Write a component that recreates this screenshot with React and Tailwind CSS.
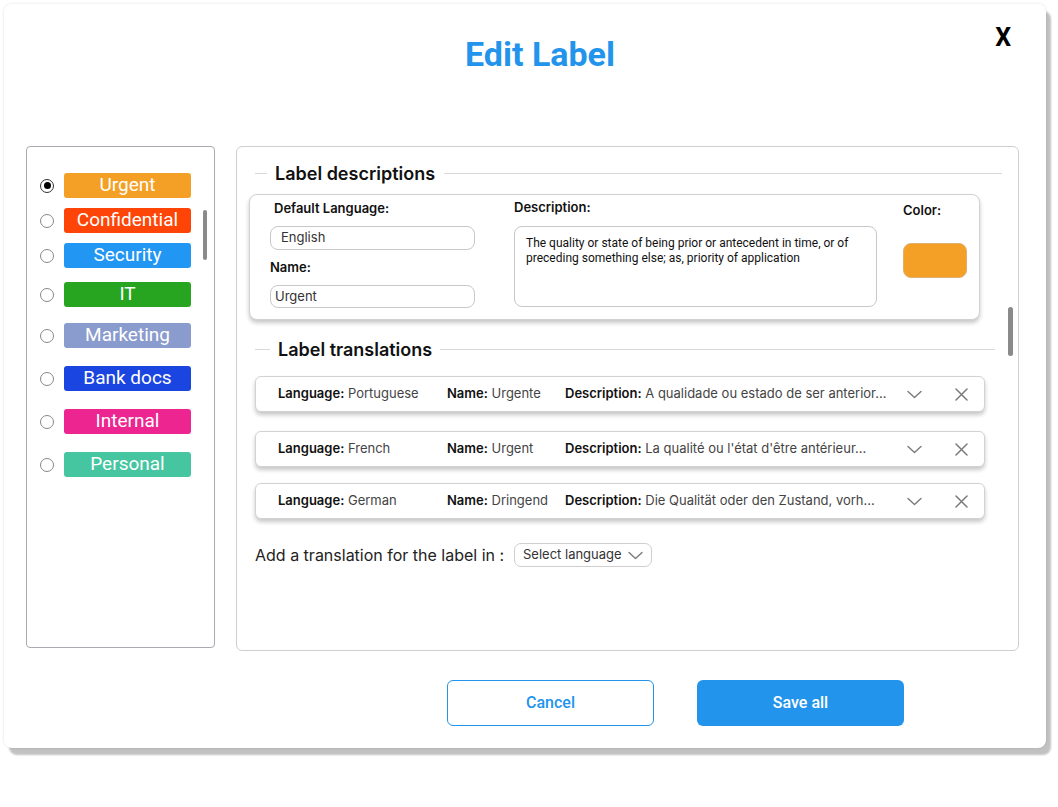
import React from "react";

const labels = [
  { name: "Urgent", bg: "bg-[#f4a026]", mt: "mt-0", checked: true },
  { name: "Confidential", bg: "bg-[#fe4406]", mt: "mt-[10px]" },
  { name: "Security", bg: "bg-[#2196f3]", mt: "mt-[10px]" },
  { name: "IT", bg: "bg-[#27a521]", mt: "mt-[14px]" },
  { name: "Marketing", bg: "bg-[#8a9bcd]", mt: "mt-[16px]" },
  { name: "Bank docs", bg: "bg-[#1a45e0]", mt: "mt-[18px]" },
  { name: "Internal", bg: "bg-[#ec2590]", mt: "mt-[18px]" },
  { name: "Personal", bg: "bg-[#45c6a0]", mt: "mt-[18px]" },
];

const translations = [
  { lang: "Portuguese", name: "Urgente", desc: "A qualidade ou estado de ser anterior...", mt: "mt-[15px]" },
  { lang: "French", name: "Urgent", desc: "La qualité ou l'état d'être antérieur...", mt: "mt-[19px]" },
  { lang: "German", name: "Dringend", desc: "Die Qualität oder den Zustand, vorh...", mt: "mt-[16px]" },
];

function Chevron({ className }) {
  return (
    <svg className={className} width="15" height="9" viewBox="0 0 15 9" fill="none">
      <path d="M1 1.5L7.5 7.5L14 1.5" stroke="#7a7a7a" strokeWidth="1.4" strokeLinecap="round" strokeLinejoin="round" />
    </svg>
  );
}

function Cross() {
  return (
    <svg width="13" height="13" viewBox="0 0 13 13" fill="none">
      <path d="M1 1L12 12M12 1L1 12" stroke="#7a7a7a" strokeWidth="1.5" strokeLinecap="round" />
    </svg>
  );
}

function Radio({ checked }) {
  if (checked) {
    return (
      <span className="flex h-[14px] w-[14px] shrink-0 items-center justify-center rounded-full border border-[#333] bg-white">
        <span className="h-[7px] w-[7px] rounded-full bg-black" />
      </span>
    );
  }
  return <span className="h-[14px] w-[14px] shrink-0 rounded-full border border-[#888] bg-white" />;
}

function SectionTitle({ title, first, textGap, lastGap, pr }) {
  return (
    <div className={"flex h-[24px] items-center pl-[18px] " + pr}>
      <span className={"h-px bg-[#d9d9d9] " + first} />
      <span className={"text-[18px] font-semibold text-[#111] " + textGap + " " + lastGap}>{title}</span>
      <span className="h-px flex-1 bg-[#d9d9d9]" />
    </div>
  );
}

export default function App() {
  return (
    <div className="min-h-[807px] w-[1058px] bg-white p-[4px] font-['Inter',sans-serif]">
      <div className="relative h-[744px] w-[1042px] rounded-[8px] bg-white shadow-[0_0_3px_rgba(0,0,0,0.12),5px_7px_2px_rgba(0,0,0,0.24)]">
        <h1 className="pl-[30px] pt-[30px] text-center font-['Roboto',sans-serif] text-[34px] font-bold leading-[40px] text-[#2394eb]">
          Edit Label
        </h1>
        <button className="absolute right-[35px] top-[19px] font-['Roboto',sans-serif] text-[25px] font-bold leading-[30px] text-black">
          X
        </button>

        <div className="mt-[72px] flex gap-[21px] pl-[22px]">
          {/* label list */}
          <div className="relative h-[502px] w-[189px] rounded-[4px] border border-[#a9a9b1] pl-[13px] pt-[26px]">
            {labels.map((l) => (
              <div key={l.name} className={"flex items-center gap-[10px] " + l.mt}>
                <Radio checked={l.checked} />
                <div
                  className={
                    "flex h-[25px] w-[127px] items-center justify-center rounded-[3px] font-['Roboto',sans-serif] text-[19px] text-white " +
                    l.bg
                  }
                >
                  {l.name}
                </div>
              </div>
            ))}
            <span className="absolute right-[7px] top-[63px] h-[50px] w-[4px] rounded-full bg-[#8a8a8a]" />
          </div>

          {/* details */}
          <div className="relative h-[505px] w-[783px] rounded-[6px] border border-[#cfcfcf] pt-[14px]">
            <SectionTitle title="Label descriptions" first="w-[12px]" textGap="ml-[8px]" lastGap="mr-[9px]" pr="pr-[16px]" />

            <div className="ml-[12px] mt-[9px] flex h-[126px] w-[731px] rounded-[8px] border border-[#d2d2d2] bg-white pl-[20px] shadow-[0_3px_4px_rgba(0,0,0,0.22)]">
              <div className="w-[205px] pt-[3px]">
                <div className="pl-[4px] text-[13px] font-semibold leading-[20px] text-[#111]">Default Language:</div>
                <div className="mt-[8px] flex h-[24px] items-center rounded-[8px] border border-[#c8c8c8] pl-[10px] text-[13px] text-[#333]">
                  English
                </div>
                <div className="mt-[7px] text-[13px] font-semibold leading-[20px] text-[#111]">Name:</div>
                <div className="mt-[8px] flex h-[23px] items-center rounded-[8px] border border-[#c8c8c8] pl-[4px] text-[13px] text-[#333]">
                  Urgent
                </div>
              </div>
              <div className="ml-[39px] w-[363px] pt-[2px]">
                <div className="text-[13px] font-semibold leading-[20px] text-[#111]">Description:</div>
                <div className="mt-[9px] h-[81px] rounded-[8px] border border-[#c8c8c8] pl-[11px] pr-[8px] pt-[9px] font-['Roboto',sans-serif] text-[12px] leading-[15px] text-[#111]">
                  The quality or state of being prior or antecedent in time, or of preceding something else; as, priority of application
                </div>
              </div>
              <div className="ml-[26px] w-[64px] pt-[5px]">
                <div className="text-[13px] font-semibold leading-[20px] text-[#111]">Color:</div>
                <div className="mt-[23px] h-[35px] w-[64px] rounded-[8px] border border-[#e0b070] bg-[#f4a026]" />
              </div>
            </div>

            <div className="mt-[17px]">
              <SectionTitle title="Label translations" first="w-[15px]" textGap="ml-[8px]" lastGap="mr-[8px]" pr="pr-[23px]" />
            </div>

            {translations.map((t) => (
              <div
                key={t.lang}
                className={
                  "ml-[18px] flex h-[36px] w-[730px] items-center rounded-[6px] border border-[#d2d2d2] bg-white pl-[22px] pr-[16px] text-[13px] text-[#444] shadow-[0_3px_4px_rgba(0,0,0,0.22)] " +
                  t.mt
                }
              >
                <span className="w-[169px]">
                  <b className="font-semibold text-[#111]">Language:</b> {t.lang}
                </span>
                <span className="w-[118px]">
                  <b className="font-semibold text-[#111]">Name:</b> {t.name}
                </span>
                <span className="flex-1">
                  <b className="font-semibold text-[#111]">Description:</b> {t.desc}
                </span>
                <Chevron />
                <span className="ml-[33px] flex">
                  <Cross />
                </span>
              </div>
            ))}

            <div className="ml-[18px] mt-[24px] flex h-[24px] items-center">
              <span className="w-[259px] text-[16px] text-[#222]">Add a translation for the label in :</span>
              <div className="flex h-[24px] w-[138px] items-center rounded-[7px] border border-[#cfcfcf] pl-[8px] text-[13px] text-[#333]">
                Select language
                <Chevron className="ml-[6px]" />
              </div>
            </div>

            <span className="absolute right-[5px] top-[160px] h-[49px] w-[5px] rounded-full bg-[#8a8a8a]" />
          </div>
        </div>

        <div className="mt-[29px] flex gap-[43px] pl-[443px]">
          <button className="h-[46px] w-[207px] rounded-[6px] border border-[#2394eb] bg-white font-['Roboto',sans-serif] text-[16px] font-medium text-[#2394eb]">
            Cancel
          </button>
          <button className="h-[46px] w-[207px] rounded-[6px] bg-[#2394eb] font-['Roboto',sans-serif] text-[16px] font-medium text-white">
            Save all
          </button>
        </div>
      </div>
    </div>
  );
}
